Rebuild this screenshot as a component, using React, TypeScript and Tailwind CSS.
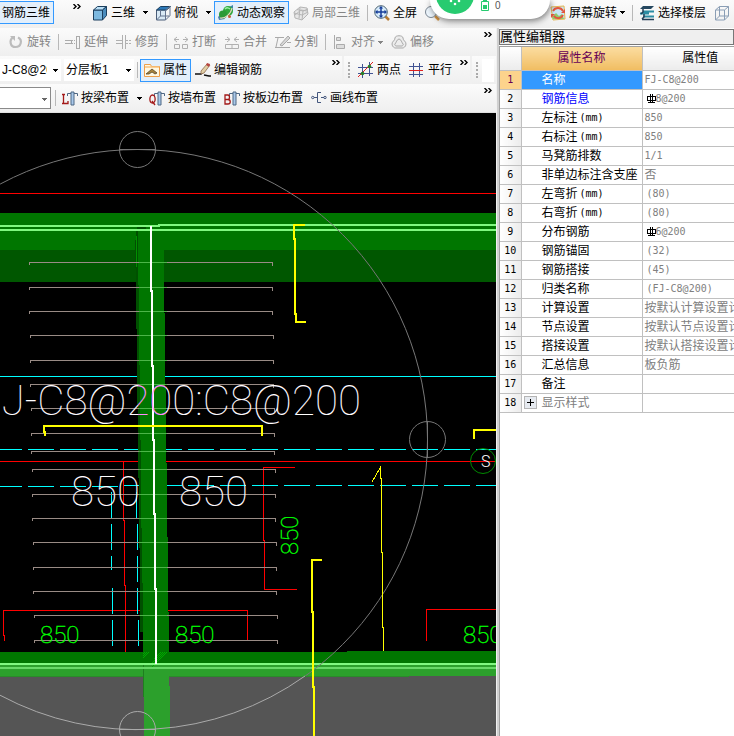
import { ReactNode } from 'react';
import clsx from 'clsx';

interface ToolButtonProps {
  label?: string;
  title?: string;
  icon?: ReactNode;
  active?: boolean;
  disabled?: boolean;
  caret?: boolean;
}

function Caret() {
  return (
    <svg viewBox="0 0 5 3" className="w-[5px] h-[3px] shrink-0" shapeRendering="crispEdges">
      <path d="M0 0h5L2.5 3z" fill="currentColor" />
    </svg>
  );
}

function ToolButton({ label, title, icon, active, disabled, caret }: ToolButtonProps) {
  return (
    <button
      type="button"
      disabled={disabled}
      aria-label={label ?? title}
      className={clsx(
        'flex items-center gap-[3px] h-[23px] shrink-0 whitespace-nowrap',
        active ? 'px-[3px] border border-[#3399ff] bg-[#e3effb]' : 'px-1',
        disabled ? 'text-[#858585]' : 'text-black'
      )}
    >
      {icon && <svg viewBox="0 0 16 16" className="w-4 h-4 shrink-0" fill="none">{icon}</svg>}
      {label}
      {caret && <Caret />}
    </button>
  );
}

function DropButton({ title }: { title: string }) {
  return (
    <button type="button" aria-label={title} className="flex items-center justify-center w-3 h-[23px] shrink-0">
      <Caret />
    </button>
  );
}

function Separator() {
  return (
    <div className="w-1.5 h-4 shrink-0 flex justify-center">
      <div className="w-px h-full bg-[#b8b8b8]" />
    </div>
  );
}

function Overflow() {
  return (
    <button type="button" aria-label="更多" className="self-start mt-1 w-3 shrink-0 flex justify-center">
      <svg viewBox="0 0 8 5" className="w-2 h-[5px]" fill="none" stroke="#000" strokeWidth="1.4">
        <path d="M.5 0 3 2.5.5 5M4.5 0 7 2.500 4.500 5" />
      </svg>
    </button>
  );
}

function Grip() {
  return <div className="w-0.5 h-4 mx-1 shrink-0 border-l-2 border-dotted border-[#aaaaaa]" />;
}

const bar = 'flex items-center bg-linear-to-b from-[#fbfbfb] to-[#efefef]';

const icons = {
  cube: (
    <>
      <path d="M1.500 5h9v10h-9z" fill="#7db9e0" stroke="#1c3f5e" />
      <path d="M1.500 5l4-3.500h9l-4 3.500z" fill="#b9dff7" stroke="#1c3f5e" />
      <path d="M10.500 5l4-3.500v9l-4 4.500z" fill="#4a8cbd" stroke="#1c3f5e" />
    </>
  ),
  topView: (
    <>
      <path d="M1.500 5h9v10h-9z" fill="#d9e9f5" stroke="#4b5d78" />
      <path d="M1.500 5l4-3.500h10l-4 3.500z" fill="#2b78b8" stroke="#1c3f5e" />
      <path d="M10.500 5l4.500-3.500v9l-4.500 4.500zM5.500 5v6h9M5.500 11l-4 4" stroke="#64748f" />
    </>
  ),
  orbit: (
    <>
      <path d="M0 12l3-3 4 5-6 1z" fill="#4c7fae" />
      <path d="M9 3l6-3v5l-3 5z" fill="#3d86a8" />
      <circle cx="10" cy="6" r="5" fill="#31a83c" />
      <circle cx="5" cy="9.500" r="4" fill="#2c9a38" />
      <path d="M2 13c5 1 11-4 12-10" stroke="#e8d9c1" strokeWidth="1.200" />
      <path d="M7 4c2-2 4-1 5 0" stroke="#9cf1a7" strokeWidth="1.500" />
      <circle cx="11.500" cy="11.500" r="1.500" fill="#c65b34" />
    </>
  ),
  partial: (
    <g stroke="#b5b5b5" fill="#e7e7e7">
      <path d="M1 7l6-5 7 1 1 6-6 6-7-2z" />
      <path d="M4 4.500l6 1.500-1 9M7 2.500l-1 11M2 10l6-5 6 1M10 6l5-2M1 8l8 2 6-3" fill="none" />
    </g>
  ),
  fit: (
    <>
      <path d="M11 11l4 4" stroke="#b67b34" strokeWidth="2.500" />
      <circle cx="7" cy="7" r="6.300" fill="#d8ecfb" stroke="#49606f" />
      <path d="M7 2v10M2 7h10" stroke="#173e9a" strokeWidth="1.500" />
      <path d="M7 1l2.200 2.500H4.800zM7 13l2.200-2.500H4.800zM1 7l2.500-2.200v4.400zM13 7l-2.500-2.200v4.400z" fill="#173e9a" />
    </>
  ),
  zoom: (
    <>
      <path d="M10 11l4 4" stroke="#d39646" strokeWidth="2.500" />
      <circle cx="6" cy="7" r="5.500" fill="#edf6fd" stroke="#7b8793" />
    </>
  ),
  screenRotate: (
    <>
      <path d="M1 2l13-1 1 13-12 1z" fill="#c8e6f5" stroke="#e4b44f" />
      <path d="M2 12l4-4 3 3 3-2 2 5H3z" fill="#8fcb6a" />
      <path d="M3 6c2-4 8-4 10 0M13 10c-2 4-7 4-9 1" stroke="#e3553f" strokeWidth="1.800" />
      <path d="M15 4v4h-4zM1 13V9h4z" fill="#e3553f" />
    </>
  ),
  floors: (
    <>
      <path d="M1 4l3-3h11l-3 3z" fill="#25475f" />
      <path d="M4 6.500h11M1 8.500h9M4 11.500h11" stroke="#2b8ca3" strokeWidth="2" />
      <path d="M3 14.500h12M4 4v3l-2 2M5 9v3l-2 2" stroke="#243e57" strokeWidth="1.500" />
    </>
  ),
  wire: <path d="M1.500 5h9v10h-9zM1.500 5l4-3.500h9l-4 3.500M10.500 15l4-4v-9.500M5.500 1.500v9.500h9M5.500 11l-4 4" stroke="#8a9eb5" />,
  rotate: (
    <>
      <path d="M5 3.500C1 6 2 13 7.500 13S15 6 10 3.500" stroke="#bcbcbc" strokeWidth="2.200" />
      <path d="M2 2h5v5z" fill="#bcbcbc" />
    </>
  ),
  extend: (
    <g stroke="#ababab" shapeRendering="crispEdges">
      <path d="M0 6.500h6v3H0M11.500 2h3v12h-3z" />
      <path d="M7 6.500h4M7 9.500h4" strokeDasharray="1 1" />
    </g>
  ),
  trim: (
    <g stroke="#b0b0b0" shapeRendering="crispEdges">
      <path d="M0 6.500h6M0 9.500h6M6.500 1v14M9.500 1v14" />
      <path d="M10 6.500h6M10 9.500h6" strokeDasharray="2 1" />
    </g>
  ),
  break: (
    <g stroke="#b0b0b0">
      <path d="M1.500 10.500h5v4h-5zM9.500 10.500h5v4h-5z" />
      <path d="M1 5.500h5M4 3 1 5.500 4 8M15 5.500h-5M12 3l3 2.500L12 8" />
    </g>
  ),
  merge: (
    <g stroke="#b0b0b0">
      <path d="M1.500 10.500h13v4h-13zM8 10v5" />
      <path d="M1 5.500h5M3 3l3 2.500L3 8M15 5.500h-5M13 3l-3 2.500L13 8" />
    </g>
  ),
  split: (
    <g stroke="#a9a9a9">
      <path d="M0 3.500h9M12 8.500h4M0 13.500h15M3 4l-2 9" />
      <path d="M5 11l8-9 2 2-8 8z" fill="#d6d6d6" />
    </g>
  ),
  align: (
    <g stroke="#ababab" fill="#dddddd">
      <path d="M2.500 1v14" />
      <path d="M4.500 3.500h4v3h-4zM4.500 10.500h8v4h-8z" />
    </g>
  ),
  offset: (
    <g stroke="#a9a9a9">
      <path d="M1 10c0-3 3-3 3-6s8-3 8 0 3 3 3 6-3 4-3 4H4s-3-1-3-4z" fill="#ededed" />
      <path d="M4 10c1-1 2-5 4-5s3 4 4 5-1 2-1 2H5s-2-1-1-2z" />
    </g>
  ),
  props: (
    <>
      <path d="M.5 2.500h6l1 2h8v10H.5z" fill="#fff8e2" stroke="#ef9f4a" />
      <path d="M1 5h14" stroke="#f7c27c" strokeWidth="1.500" />
      <path d="M2 12l6-5 5 4-2 1-3-2-3 2z" fill="#a9853d" stroke="#54452b" strokeWidth="0.800" />
    </>
  ),
  editBar: (
    <>
      <path d="M0 12h6l2-2M9 13l5 1h2" stroke="#111" strokeWidth="1.500" />
      <path d="M6 9l6-7 3 1-6 8-3 1z" fill="#e2cfa5" stroke="#8d6a4c" strokeWidth="0.800" />
      <path d="M12 1l3 1-1 3-3-2z" fill="#b84642" />
    </>
  ),
  twoPoint: (
    <>
      <path d="M0 5.500h15M0 11.500h15M4.500 2v14M11.500 0v14" stroke="#415393" />
      <path d="M0 15 15 0" stroke="#df2020" />
      <circle cx="4.500" cy="11.500" r="1.800" fill="#287d25" />
      <circle cx="11.500" cy="4.500" r="1.800" fill="#287d25" />
    </>
  ),
  parallel: (
    <g shapeRendering="crispEdges">
      <path d="M0 4.500h14M0 12.500h14M4.500 1v14M10.500 1v14" stroke="#415393" />
      <path d="M0 8.500h14" stroke="#df2020" />
    </g>
  ),
};

/* T-shaped slab mark shared by the beam, wall and edge layout tools */
function layoutIcon(mark: ReactNode) {
  return (
    <>
      <path d="M5.500 6V3.500h10V6" stroke="#4f6884" />
      <path d="M9 2h3v13H9z" fill="#a9c8ea" stroke="#4f6884" />
      <g stroke="#a31919" strokeWidth="1.300">{mark}</g>
    </>
  );
}

const beamIcon = layoutIcon(<path d="M0 4.500h3M1.500 4v9.500M0 13.500h6V11" />);
const wallIcon = layoutIcon(<path d="M3.500 5C0 5 0 13 3.500 13s3.500-8 0-8zM3 11l3 4" />);
const edgeIcon = layoutIcon(<path d="M1 5v9h3c3 0 3-4.500 0-4.500H1h3C6 9.500 6 5 4 5z" />);
const lineIcon = (
  <g stroke="#44577e">
    <circle cx="1.800" cy="7.500" r="1.200" />
    <circle cx="14" cy="7.500" r="1.200" />
    <path d="M3 7.500h3M10 2.500H6.500v10H10M10 7.500h3" />
  </g>
);

interface ComboProps {
  label: string;
  value: string;
  className: string;
}

function Combo({ label, value, className }: ComboProps) {
  return (
    <div className={clsx('relative h-[22px] shrink-0 bg-white', className)}>
      <select aria-label={label} className="appearance-none w-full h-full pl-0.5 pr-3.5 outline-none text-[12px]">
        <option>{value}</option>
      </select>
      <span className="absolute right-[3px] top-[10px] pointer-events-none">
        <Caret />
      </span>
    </div>
  );
}

function RebarMark() {
  return (
    <svg viewBox="0 0 9 9" className="w-[9px] h-[9px] ml-0.5 shrink-0" fill="none" stroke="#000" shapeRendering="crispEdges">
      <path d="M.5 2.500h8v4h-8zM3.500 0v9M5.500 0v9M1 8.500h7" />
    </svg>
  );
}

interface Property {
  name: string;
  unit?: string;
  value: string;
  rebar?: boolean;
  indent?: boolean;
}

const properties: Property[] = [
  { name: '名称', value: 'FJ-C8@200' },
  { name: '钢筋信息', value: '8@200', rebar: true },
  { name: '左标注', unit: '(mm)', value: '850' },
  { name: '右标注', unit: '(mm)', value: '850' },
  { name: '马凳筋排数', value: '1/1' },
  { name: '非单边标注含支座', value: '否' },
  { name: '左弯折', unit: '(mm)', value: '(80)', indent: true },
  { name: '右弯折', unit: '(mm)', value: '(80)', indent: true },
  { name: '分布钢筋', value: '6@200', rebar: true },
  { name: '钢筋锚固', value: '(32)', indent: true },
  { name: '钢筋搭接', value: '(45)', indent: true },
  { name: '归类名称', value: '(FJ-C8@200)', indent: true },
  { name: '计算设置', value: '按默认计算设置计算' },
  { name: '节点设置', value: '按默认节点设置计算' },
  { name: '搭接设置', value: '按默认搭接设置计算' },
  { name: '汇总信息', value: '板负筋' },
  { name: '备注', value: '' },
  { name: '显示样式', value: '' },
];

const mono = "font-['DejaVu_Sans_Mono','Noto_Sans_CJK_SC',monospace]";

function PropertyEditor() {
  return (
    <aside className="w-[237px] shrink-0 flex flex-col overflow-hidden bg-white border-l-2 border-[#d0d0d0]">
      <h2 className="h-4 mt-px shrink-0 flex items-center text-[13px] bg-[#efefef] border border-[#777777]">属性编辑器</h2>
      <div className="flex-1 mt-px border-l border-t border-[#a0a0a0] overflow-hidden">
        <table className="table-fixed w-[258px] border-collapse text-[12px] leading-[18px]">
          <thead>
            <tr className="h-[23px]">
              <th className="w-[21px] p-0 border-r border-b border-[#c0c0c0] bg-linear-to-b from-white to-[#ececec]" aria-label="序号" />
              <th className="w-[121px] p-0 font-normal text-[#660055] border-r border-b border-[#c0c0c0] bg-linear-to-b from-[#fbdda0] to-[#f0bd61]">属性名称</th>
              <th className="p-0 font-normal border-b border-[#c0c0c0] bg-linear-to-b from-white to-[#ececec]">属性值</th>
            </tr>
          </thead>
          <tbody>
            {properties.map((p, i) => (
              <tr key={p.name} className="h-[19px]">
                <td
                  className={clsx(
                    'p-0 text-center text-[10px] border-r border-b border-[#c0c0c0]',
                    mono,
                    i === 0 ? 'bg-[#fcd38c] text-[#660055]' : 'bg-linear-to-r from-white to-[#ececec]'
                  )}
                >
                  {i + 1}
                </td>
                <td
                  className={clsx(
                    'p-0 whitespace-nowrap border-r border-b border-[#c0c0c0]',
                    i === 0 && 'bg-[#3399ff] text-white',
                    i === 1 && 'text-[#0000ff]',
                    i === 17 && 'text-[#808080]'
                  )}
                >
                  <div className="flex items-center h-[18px]">
                    <span className="w-5 shrink-0 flex items-center pl-0.5">
                      {i === 17 && (
                        <button type="button" aria-label="展开" className="w-[13px] h-[13px] border border-[#b5b5b5] bg-[#e6eaf0] flex items-center justify-center">
                          <svg viewBox="0 0 7 7" className="w-[7px] h-[7px]" stroke="#000" shapeRendering="crispEdges">
                            <path d="M0 3.500h7M3.500 0v7" />
                          </svg>
                        </button>
                      )}
                    </span>
                    {p.name}
                    {p.unit && <span className={clsx('text-[10px] pl-0.5', mono)}>{p.unit}</span>}
                  </div>
                </td>
                <td className="p-0 whitespace-nowrap text-[#808080] border-b border-[#c0c0c0]">
                  <div className={clsx('flex items-center h-[18px]', p.indent ? 'pl-1' : 'pl-0.5')}>
                    {p.rebar && <RebarMark />}
                    <span className={/^[\x20-\x7e]*$/.test(p.value) ? clsx('text-[10px]', mono) : undefined}>{p.value}</span>
                  </div>
                </td>
              </tr>
            ))}
          </tbody>
        </table>
      </div>
    </aside>
  );
}

const barRows = [262, 287, 311, 335, 360, 384, 408, 433, 451, 469, 494, 518, 542, 567, 591, 615, 640];

function Viewport() {
  return (
    <svg
      viewBox="0 113 496 623"
      preserveAspectRatio="xMinYMin slice"
      className="block w-full flex-1 min-h-0 bg-black font-['Roboto',sans-serif]"
      fill="none"
    >
      <defs>
        <linearGradient id="overBeam" gradientUnits="userSpaceOnUse" x1="0" y1="0" x2="496" y2="0">
          <stop offset="0.278" stopColor="#ffffff" />
          <stop offset="0.278" stopColor="#ff8cff" />
          <stop offset="0.334" stopColor="#ff8cff" />
          <stop offset="0.334" stopColor="#ffffff" />
        </linearGradient>
        <linearGradient id="barTint" gradientUnits="userSpaceOnUse" x1="0" y1="0" x2="496" y2="0">
          <stop offset="0.28" stopColor="#998b85" />
          <stop offset="0.28" stopColor="#4cb548" />
          <stop offset="0.336" stopColor="#4cb548" />
          <stop offset="0.336" stopColor="#998b85" />
        </linearGradient>
        <pattern id="hatch" width="2" height="2" patternUnits="userSpaceOnUse">
          <path d="M0 0h1v1H0zM1 1h1v1H1z" fill="#00aa00" />
        </pattern>
        <clipPath id="aboveSlab">
          <path d="M0 113h496v563H0z" />
        </clipPath>
      </defs>
      <g shapeRendering="crispEdges">
        {/* slabs */}
        <path d="M0 213h496v37H0z" fill="#007600" />
        <path d="M0 250h496v32H0z" fill="#005700" />
        <path d="M0 652h347v-1h149v25H0z" fill="#007600" />
        <path d="M0 664h496v12H0z" fill="#2ca02c" />
        <path d="M0 676h496v60H0z" fill="#555555" />
        <path d="M0 676h409" stroke="#2b8a2b" />

        {/* axes and guides */}
        <path d="M0 193.500h496M0 461.500h496M123.500 461v59h1v65h1v67M140 610.500H3.500v25h1v5M168 610.500h79.500v30" stroke="#ff0000" />
        <path d="M295 467.500h-31.500v73h1v49h32.500M426.500 641v-31.500H496" stroke="#ff0000" />
        <path d="M0 376.500h496" stroke="#00ffff" />
        <g stroke="#00ffff" strokeDasharray="26 6">
          <path d="M-4 449.500h500M-4 486.500h122M124 485.500h372" />
          <path d="M111.500 492v78M112.500 588v58M136.500 492v26M137.500 524v90M138.500 620v26" />
        </g>

        {/* beam */}
        <path d="M138 227h-1l-2 18 1 45 1 76 1 74 1 74 1 66v52h6V227z" fill="#005000" />
        <path d="M138 230h26v83h1v75h1v75h1v74h1v75h1v40h-26v-69h-1v-55h-1v-88h-1v-75h-1v-80h-1z" fill="#007600" />
        <path d="M144 664h25v22h1v50h-26z" fill="#2ca02c" />
        <path d="M143.500 664v33" stroke="#207d20" />
        <path d="M136.500 236v31" stroke="#009000" />
        <path d="M143 652h8l-8 7zM159 652h9l-16 15v-5z" fill="url(#hatch)" />
        <path d="M0 226h159v-1h337M0 230h496M0 664h496" stroke="#80f880" strokeWidth="2" />
        <path d="M0 668h496" stroke="#68d968" strokeWidth="2" />

        {/* distribution bars */}
        {barRows.map((y, i) => {
          const left = 29 + Math.floor(i / 3);
          const right = 272 + Math.floor(i / 3);
          return <path key={y} d={`M${left}.5 ${y + 3}v-2.500H${right}.5v3`} stroke="url(#barTint)" />;
        })}
      </g>

      {/* orbit rings */}
      <g stroke="#777777">
        <circle cx="137.500" cy="439.500" r="290" clipPath="url(#aboveSlab)" />
        <circle cx="137.500" cy="149.500" r="18" />
        <circle cx="427.500" cy="439.500" r="18" />
        <path d="M119 149.500h37M427.500 421v37" />
      </g>
      <g stroke="#aaaaaa">
        <circle cx="137.500" cy="729.500" r="18" />
        <path d="M0 695.200A290 290 0 0 0 305 676" />
        <path d="M119 729.500h37" />
      </g>

      {/* rebar */}
      <g shapeRendering="crispEdges">
        <path d="M151 226v65h1v75h1v74h1v74h1v75h1v75" stroke="#ffffff" strokeWidth="2" />
        <g stroke="#ffff00" strokeWidth="2">
          <path d="M305 225h-11v14h1v75h1v8h10" />
          <path d="M45 436v-4h-1v-6h218v10M474 439v-9h22" />
          <path d="M322 560h-10v52h1v75h1v49" />
        </g>
        <path d="M372 482l8-14v10h1v74h1v75h1v24" stroke="#ffff00" />
      </g>
      <circle cx="483" cy="461" r="12.500" stroke="#008a00" />

      {/* annotations */}
      <g className="text-[42px] font-thin" fill="url(#overBeam)">
        <text x="361" y="415" textAnchor="end">J-C8@200:C8@200</text>
        <text x="71" y="506">850</text>
        <text x="179" y="506">850</text>
      </g>
      <g className="text-[24px] font-thin" fill="#00ff00" stroke="#00ff00" strokeWidth="0.400">
        <text x="40" y="643">850</text>
        <text x="175" y="643">850</text>
        <text x="463" y="643">850</text>
        <text transform="translate(298 555) rotate(-90)">850</text>
      </g>
      <text x="481" y="467" className="text-[16px] font-light" fill="#ffffff">S</text>
    </svg>
  );
}

/* desktop speed widget that hangs over the top edge */
function FloatingWidget() {
  return (
    <div className="absolute top-0 left-[430px] w-[120px] h-[19px] bg-white rounded-b-[19px] shadow-[1px_2px_6px_rgba(0,0,0,0.5)]">
      <svg viewBox="0 0 120 19" className="block w-full h-full">
        <circle cx="25" cy="-5" r="19" fill="#27cb70" />
        <g fill="#ffffff">
          <circle cx="21" cy="1" r="1.300" />
          <circle cx="29" cy="1" r="1.300" />
          <circle cx="25" cy="4" r="1.300" />
        </g>
        <path d="M51.500 1.500h7v9h-7z" fill="#ffffff" stroke="#27cb70" />
        <path d="M53 5h4v4h-4zM53 0h4v1h-4z" fill="#27cb70" />
        <text x="65" y="9" className="text-[10px]" fill="#555555">0</text>
      </svg>
    </div>
  );
}

export default function App() {
  return (
    <div className="h-screen flex flex-col overflow-hidden bg-[#f0f0f0] text-black text-[12px] font-['Liberation_Sans','Noto_Sans_CJK_SC',sans-serif]">
      <header className="relative flex items-center h-7 pb-[3px] shrink-0 overflow-hidden bg-linear-to-b from-[#fbfbfb] to-[#efefef]">
        <button type="button" className="h-[23px] w-[54px] shrink-0 pr-[3px] text-right whitespace-nowrap border border-l-0 border-[#3399ff] bg-[#e3effb]">
          钢筋三维
        </button>
        <div className="w-[17px] shrink-0" />
        <Overflow />
        <div className="w-[5px] shrink-0" />
        <ToolButton label="三维" icon={icons.cube} />
        <DropButton title="三维选项" />
        <ToolButton label="俯视" icon={icons.topView} />
        <DropButton title="俯视选项" />
        <ToolButton label="动态观察" icon={icons.orbit} active />
        <ToolButton label="局部三维" icon={icons.partial} disabled />
        <Separator />
        <ToolButton label="全屏" icon={icons.fit} />
        <ToolButton title="缩放" icon={icons.zoom} />
        <div className="w-[101px] shrink-0" />
        <ToolButton label="屏幕旋转" icon={icons.screenRotate} caret />
        <Separator />
        <ToolButton label="选择楼层" icon={icons.floors} />
        <ToolButton title="线框" icon={icons.wire} />
        <FloatingWidget />
      </header>

      <div className="flex flex-1 min-h-0">
        <main className="flex-1 min-w-0 flex flex-col pr-px">
          <div className={clsx(bar, 'h-7 pl-1 pr-0.5 shrink-0 overflow-hidden')}>
            <ToolButton label="旋转" icon={icons.rotate} disabled />
            <Separator />
            <ToolButton label="延伸" icon={icons.extend} disabled />
            <ToolButton label="修剪" icon={icons.trim} disabled />
            <Separator />
            <ToolButton label="打断" icon={icons.break} disabled />
            <ToolButton label="合并" icon={icons.merge} disabled />
            <ToolButton label="分割" icon={icons.split} disabled />
            <Separator />
            <ToolButton label="对齐" icon={icons.align} disabled caret />
            <ToolButton label="偏移" icon={icons.offset} disabled />
            <div className="flex-1" />
            <Overflow />
          </div>

          <div className="flex h-7 shrink-0 overflow-hidden">
            <div className={clsx(bar, 'flex-1 min-w-0')}>
              <Combo label="构件" value="J-C8@200" className="w-[61px]" />
              <Combo label="分层板" value="分层板1" className="w-[70px] ml-[3px]" />
              <Separator />
              <ToolButton label="属性" icon={icons.props} active />
              <ToolButton label="编辑钢筋" icon={icons.editBar} />
              <div className="flex-1" />
              <Overflow />
            </div>
            <div className={clsx(bar, 'ml-0.5')}>
              <Grip />
              <ToolButton label="两点" icon={icons.twoPoint} />
              <ToolButton label="平行" icon={icons.parallel} />
              <div className="w-0.5" />
              <Overflow />
            </div>
            <div className={clsx(bar, 'ml-0.5 pr-0.5')}>
              <Grip />
              <div className="w-3 h-[23px] bg-white" />
            </div>
          </div>

          <div className={clsx(bar, 'h-[29px] pr-0.5 shrink-0 overflow-hidden border-b border-[#e0e0e0]')}>
            <Combo label="布置方式" value="" className="w-[51px] border border-l-0 border-[#8a8a8a] text-[#666666]" />
            <div className="w-px shrink-0" />
            <Separator />
            <ToolButton label="按梁布置" icon={beamIcon} />
            <DropButton title="按梁布置选项" />
            <ToolButton label="按墙布置" icon={wallIcon} />
            <ToolButton label="按板边布置" icon={edgeIcon} />
            <ToolButton label="画线布置" icon={lineIcon} />
            <div className="flex-1" />
            <Overflow />
          </div>

          <Viewport />
        </main>
        <PropertyEditor />
      </div>
    </div>
  );
}
